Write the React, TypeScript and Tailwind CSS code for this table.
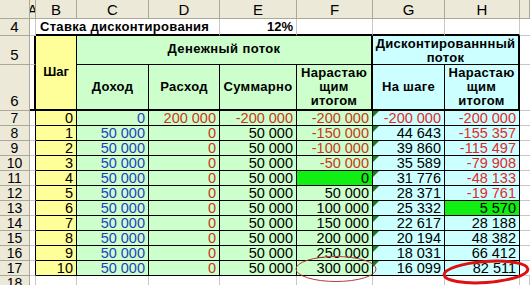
import React from "react";

const cols = ["A", "B", "C", "D", "E", "F", "G", "H", ""];

type Row = {
  step: number;
  c: string;
  d: string;
  e: string;
  f: string;
  g: string;
  h: string;
};

const rows: Row[] = [
  { step: 0, c: "0", d: "200 000", e: "-200 000", f: "-200 000", g: "-200 000", h: "-200 000" },
  { step: 1, c: "50 000", d: "0", e: "50 000", f: "-150 000", g: "44 643", h: "-155 357" },
  { step: 2, c: "50 000", d: "0", e: "50 000", f: "-100 000", g: "39 860", h: "-115 497" },
  { step: 3, c: "50 000", d: "0", e: "50 000", f: "-50 000", g: "35 589", h: "-79 908" },
  { step: 4, c: "50 000", d: "0", e: "50 000", f: "0", g: "31 776", h: "-48 133" },
  { step: 5, c: "50 000", d: "0", e: "50 000", f: "50 000", g: "28 371", h: "-19 761" },
  { step: 6, c: "50 000", d: "0", e: "50 000", f: "100 000", g: "25 332", h: "5 570" },
  { step: 7, c: "50 000", d: "0", e: "50 000", f: "150 000", g: "22 617", h: "28 188" },
  { step: 8, c: "50 000", d: "0", e: "50 000", f: "200 000", g: "20 194", h: "48 382" },
  { step: 9, c: "50 000", d: "0", e: "50 000", f: "250 000", g: "18 031", h: "66 412" },
  { step: 10, c: "50 000", d: "0", e: "50 000", f: "300 000", g: "16 099", h: "82 511" },
];

const neg = (v: string) => v.startsWith("-");

function Num({ value, className }: { value: string; className: string }) {
  return (
    <div className={`relative flex items-end justify-end pr-[3px] leading-[14px] border-r border-b border-black ${className}`}>
      {value}
    </div>
  );
}

export default function App() {
  return (
    <div className="relative w-[530px] h-[285px] overflow-hidden bg-white font-['Liberation_Sans',Arial,sans-serif] text-black">
      <div className="grid grid-cols-[30px_6px_41px_72px_71px_77px_76px_72px_75px_10px] grid-rows-[19px_17px_29px_46px_repeat(11,15px)_9px]">
        {/* column headers */}
        <div className="bg-[#ece9d8] border-r border-b border-[#aca899]" />
        {cols.map((c, i) => (
          <div
            key={i}
            className="bg-[#ece9d8] border-r border-b border-[#aca899] flex items-center justify-center overflow-hidden text-[15px] leading-none"
          >
            {c}
          </div>
        ))}

        {/* row 4 */}
        <div className="bg-[#ece9d8] border-r border-b border-[#aca899] flex items-end justify-center text-[15px] leading-[16px]">4</div>
        <div className="border-r border-b border-[#c8c8c8]" />
        <div className="col-span-3 border-r border-[#c8c8c8] border-b-2 border-b-black flex items-center pl-[4px] text-[13px] font-bold tracking-[0.3px]">
          Ставка дисконтирования
        </div>
        <div className="border-r border-[#c8c8c8] border-b-2 border-b-black flex items-center justify-end pr-[3px] text-[13px] font-bold">
          12%
        </div>
        <div className="border-r border-[#c8c8c8] border-b-2 border-b-black" />
        <div className="border-r border-[#c8c8c8] border-b-2 border-b-black" />
        <div className="border-r border-[#c8c8c8] border-b-2 border-b-black" />
        <div className="border-b border-[#c8c8c8]" />

        {/* row 5 */}
        <div className="bg-[#ece9d8] border-r border-b border-[#aca899] flex items-end justify-center text-[15px] leading-[18px]">5</div>
        <div className="border-r-2 border-r-black border-b border-b-[#c8c8c8]" />
        <div className="row-span-2 bg-[#ffff99] border-r border-black border-b-2 flex items-center justify-center text-[13px] font-bold pb-[2px]">
          Шаг
        </div>
        <div className="col-span-4 bg-[#ccffcc] border-r-2 border-b border-black flex items-center justify-center text-[13px] font-bold tracking-[0.4px] pb-[2px]">
          Денежный поток
        </div>
        <div className="col-span-2 bg-[#ccffff] border-r-2 border-b border-black flex items-center justify-center text-center text-[13px] font-bold leading-[14px] tracking-[0.3px] pt-[2px]">
          Дисконтированнный
          <br />
          поток
        </div>
        <div className="border-b border-[#c8c8c8]" />

        {/* row 6 */}
        <div className="bg-[#ece9d8] border-r border-b border-[#aca899] flex items-end justify-center text-[15px] leading-[18px]">6</div>
        <div className="border-r-2 border-r-black border-b-2 border-b-black" />
        <div className="bg-[#ccffcc] border-r border-black border-b-2 flex items-center justify-center text-[13px] font-bold tracking-[0.3px]">Доход</div>
        <div className="bg-[#ccffcc] border-r border-black border-b-2 flex items-center justify-center text-[13px] font-bold tracking-[0.3px]">Расход</div>
        <div className="bg-[#ccffcc] border-r border-black border-b-2 flex items-center justify-center text-[13px] font-bold tracking-[0.3px]">Суммарно</div>
        <div className="bg-[#ccffcc] border-r-2 border-black border-b-2 flex items-center justify-center text-center text-[13px] font-bold leading-[14px] tracking-[0.3px]">
          Нарастаю
          <br />
          щим
          <br />
          итогом
        </div>
        <div className="bg-[#ccffff] border-r border-black border-b-2 flex items-center justify-center text-[13px] font-bold tracking-[0.3px]">На шаге</div>
        <div className="bg-[#ccffff] border-r-2 border-black border-b-2 flex items-center justify-center text-center text-[13px] font-bold leading-[14px] tracking-[0.3px]">
          Нарастаю
          <br />
          щим
          <br />
          итогом
        </div>
        <div className="border-b border-[#c8c8c8]" />

        {/* data rows */}
        {rows.map((r, i) => (
          <React.Fragment key={r.step}>
            <div className="bg-[#ece9d8] border-r border-b border-[#aca899] flex items-end justify-center text-[14px] leading-[13px]">
              {i + 7}
            </div>
            <div className="border-r border-r-black border-b border-b-[#c8c8c8]" />
            <Num value={String(r.step)} className="bg-[#ffff99] text-[14.5px]" />
            <Num value={r.c} className="bg-[#ccffcc] text-[14.5px] text-[#1f3fbf]" />
            <Num value={r.d} className="bg-[#ccffcc] text-[14.5px] text-[#c8361c]" />
            <Num value={r.e} className={`bg-[#ccffcc] text-[14.5px] ${neg(r.e) ? "text-[#c8361c]" : "text-black"}`} />
            <Num
              value={r.f}
              className={`text-[14.5px] ${r.f === "0" ? "bg-[#11ee11]" : "bg-[#ccffcc]"} ${neg(r.f) ? "text-[#c8361c]" : "text-black"}`}
            />
            <div className="relative flex items-end justify-end pr-[3px] leading-[14px] border-r border-b border-black bg-[#ccffff] text-[14.5px]">
              <span className="absolute left-0 top-0 w-[6px] h-[6px] bg-[#1e7a1e] [clip-path:polygon(0_0,100%_0,0_100%)]" />
              <span className={neg(r.g) ? "text-[#e02a2a]" : "text-black"}>{r.g}</span>
            </div>
            <Num
              value={r.h}
              className={`text-[14.5px] ${r.h === "5 570" ? "bg-[#11ee11]" : "bg-[#ccffff]"} ${neg(r.h) ? "text-[#e02a2a]" : "text-black"}`}
            />
            <div className="border-b border-[#c8c8c8]" />
          </React.Fragment>
        ))}

        {/* row 18 */}
        <div className="bg-[#ece9d8] border-r border-[#aca899] flex items-start justify-center text-[14px] leading-[14px] overflow-hidden">18</div>
        {cols.map((_, i) => (
          <div key={i} className="border-r border-[#c8c8c8]" />
        ))}
      </div>

      {/* hand-drawn ellipses */}
      <svg className="absolute left-0 top-0 pointer-events-none" width="530" height="285">
        <ellipse cx="336" cy="269" rx="40" ry="12.5" fill="none" stroke="#b83a3a" strokeWidth="1" />
        <ellipse
          cx="486"
          cy="272"
          rx="42"
          ry="10.5"
          fill="none"
          stroke="#dd1111"
          strokeWidth="3"
          transform="rotate(-4 486 272)"
        />
      </svg>
    </div>
  );
}
